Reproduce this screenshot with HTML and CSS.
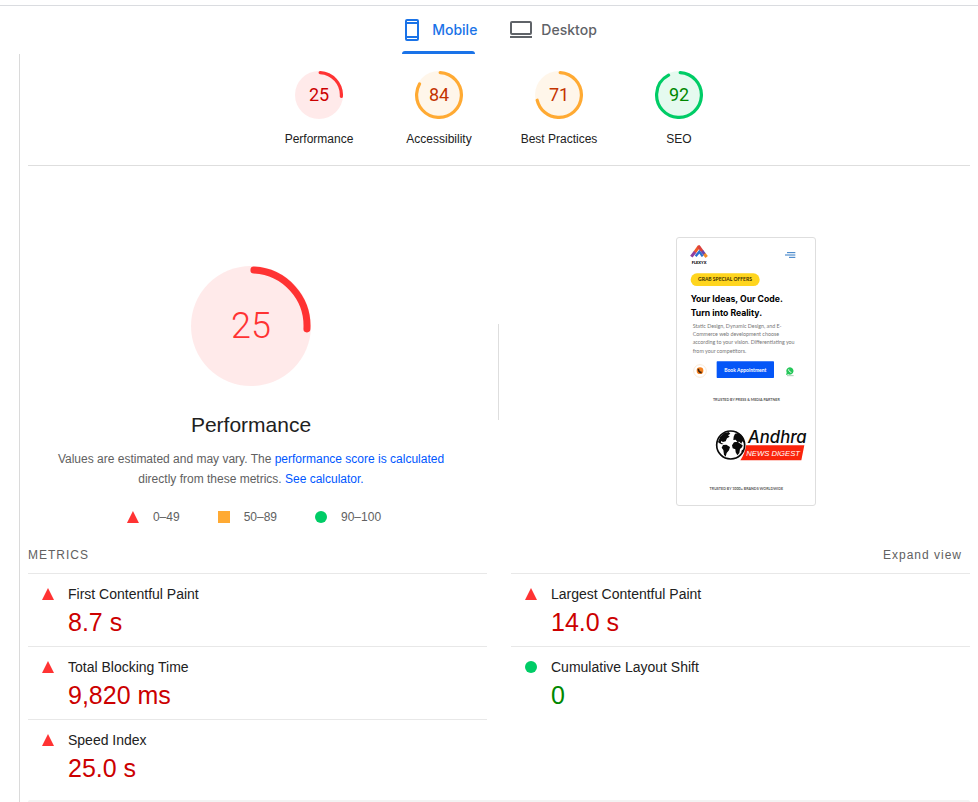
FILE: index.html
```html
<!DOCTYPE html>
<html lang="en">
<head>
<meta charset="utf-8">
<meta name="viewport" content="width=device-width, initial-scale=1">
<title>Performance report</title>
<link rel="stylesheet" href="styles.css">
</head>
<body>
<nav class="tabs" aria-label="Device">
  <button class="tab tab-active" type="button">
    <svg class="tab-icon" viewBox="0 0 24 24" aria-hidden="true"><path fill="currentColor" fill-rule="evenodd" d="M7 1h10a2 2 0 0 1 2 2v18a2 2 0 0 1-2 2H7a2 2 0 0 1-2-2V3a2 2 0 0 1 2-2zm0 2v1h10V3zm0 3v12h10V6zm0 14v1h10v-1z"/></svg>
    <span>Mobile</span>
  </button>
  <button class="tab" type="button">
    <svg class="tab-icon" viewBox="0 0 24 24" aria-hidden="true"><path fill="currentColor" fill-rule="evenodd" d="M3 3h18a2 2 0 0 1 2 2v10a2 2 0 0 1-2 2H3a2 2 0 0 1-2-2V5a2 2 0 0 1 2-2zm0 2v10h18V5zM1 18h22v2H1z"/></svg>
    <span>Desktop</span>
  </button>
</nav>
<main class="report">
  <section class="scores" aria-label="Scores">
    <a class="score fail" href="#performance">
      <span class="gauge"><svg viewBox="0 0 120 120" aria-hidden="true"><circle class="base" cx="60" cy="60" r="60"/><circle class="arc" cx="60" cy="60" r="56" pathLength="100" stroke-dasharray="25 100"/></svg><span class="number">25</span></span>
      <span class="label">Performance</span>
    </a>
    <a class="score average" href="#accessibility">
      <span class="gauge"><svg viewBox="0 0 120 120" aria-hidden="true"><circle class="base" cx="60" cy="60" r="60"/><circle class="arc" cx="60" cy="60" r="56" pathLength="100" stroke-dasharray="82 100"/></svg><span class="number">84</span></span>
      <span class="label">Accessibility</span>
    </a>
    <a class="score average" href="#best-practices">
      <span class="gauge"><svg viewBox="0 0 120 120" aria-hidden="true"><circle class="base" cx="60" cy="60" r="60"/><circle class="arc" cx="60" cy="60" r="56" pathLength="100" stroke-dasharray="70 100"/></svg><span class="number">71</span></span>
      <span class="label">Best Practices</span>
    </a>
    <a class="score pass" href="#seo">
      <span class="gauge"><svg viewBox="0 0 120 120" aria-hidden="true"><circle class="base" cx="60" cy="60" r="60"/><circle class="arc" cx="60" cy="60" r="56" pathLength="100" stroke-dasharray="91 100"/></svg><span class="number">92</span></span>
      <span class="label">SEO</span>
    </a>
  </section>

  <section class="overview" id="performance">
    <div class="summary">
      <div class="gauge gauge-large fail"><svg viewBox="0 0 120 120" aria-hidden="true"><circle class="base" cx="60" cy="60" r="60"/><circle class="arc" cx="60" cy="60" r="56" pathLength="100" stroke-dasharray="25 100"/></svg><span class="number">25</span></div>
      <h1 class="title">Performance</h1>
      <p class="description">Values are estimated and may vary. The <a href="#score">performance score is calculated</a> directly from these metrics. <a href="#calculator">See calculator.</a></p>
      <ul class="legend">
        <li><span class="mark triangle"></span>0–49</li>
        <li><span class="mark square"></span>50–89</li>
        <li><span class="mark dot"></span>90–100</li>
      </ul>
    </div>
    <div class="divider"></div>
    <div class="preview">
      <svg class="thumbnail" viewBox="0 0 414 801" role="img" aria-label="Page preview">
        <g fill="none" stroke-width="9">
          <path stroke="#f0582a" d="M67 24L53 43"/>
          <path stroke="#8f3f9f" d="M54 42L43 56"/>
          <path stroke="#d9413f" d="M64 24l12 16"/>
          <path stroke="#6d45a8" d="M75 39l8 10"/>
          <path stroke="#f28c28" d="M82 48l7 9"/>
          <path stroke="#2f6fd0" stroke-width="7" d="M56 55l11-14 10 14"/>
        </g>
        <text class="thumb-logo" x="66" y="77">FLEXYX</text>
        <path stroke="#2f78c4" stroke-width="3" d="M330 44h25M324 51h31M336 58h19"/>
        <rect x="41" y="106" width="207" height="38" rx="19" fill="#ffd51e"/>
        <text class="thumb-badge" x="144" y="130">GRAB SPECIAL OFFERS</text>
        <text class="thumb-heading" x="41" y="193">Your Ideas, Our Code.</text>
        <text class="thumb-heading" x="41" y="233">Turn into Reality.</text>
        <g class="thumb-copy">
          <text x="47" y="270">Static Design, Dynamic Design, and E-</text>
          <text x="47" y="295">Commerce web development choose</text>
          <text x="47" y="319">according to your vision. Differentiating you</text>
          <text x="47" y="344">from your competitors.</text>
        </g>
        <circle cx="69" cy="399" r="19" fill="#fff" stroke="#f5dfc4" stroke-width="2"/>
        <circle cx="69" cy="398" r="10" fill="#f58220"/>
        <path d="M64 392c0 6 4 11 10 12" fill="none" stroke="#40210b" stroke-width="5"/>
        <rect x="119" y="370" width="172" height="50" rx="2" fill="#0556f7"/>
        <text class="thumb-button" x="205" y="401">Book Appointment</text>
        <path fill="#25c759" d="M339 388a11 11 0 1 1-5 21l-7 2 2-7a11 11 0 0 1 10-16z"/>
        <path d="M335 394c0 5 3 8 8 9" fill="none" stroke="#fff" stroke-width="3"/>
        <path d="M330 413h20" stroke="#79b98c" stroke-width="2"/>
        <text class="thumb-caption" x="208" y="489">TRUSTED BY PRESS &amp; MEDIA PARTNER</text>
        <g>
          <circle cx="161" cy="621" r="42" fill="#fff" stroke="#0b0b0b" stroke-width="5"/>
          <path fill="#0b0b0b" d="M123 612l6-14 12-12 14-4 5 5-7 5 5 4-8 5-4 9-8 2-6-3 0 5 8 4-6 1-8-4zM138 621l10-1 11 7-3 10-7 8-3 11-5-6-2-14-5-7z"/>
          <path fill="#0b0b0b" d="M170 596l4-9 11-2 10 9 6 13 1 9-6-6-3 7-6-6-6 1-5-7-7 1zM171 613l11-2 8 6 7 5-2 6-6 5-2 12-6 7-5-9-1-9-8-3-2-9zM195 635l4 1-3 8-3-2z"/>
          <path fill="#fa240c" d="M207 622h175l-9 45H190q14-20 17-45z"/>
          <text class="thumb-brand" x="213" y="615">Andhra</text>
          <text class="thumb-strap" x="208" y="653">NEWS DIGEST</text>
        </g>
        <text class="thumb-caption" x="208" y="755">TRUSTED BY 1000+ BRANDS WORLDWIDE</text>
      </svg>
    </div>
  </section>

  <section class="metrics">
    <header class="metrics-header">
      <h2>METRICS</h2>
      <button type="button">Expand view</button>
    </header>
    <div class="metric-columns">
      <div class="metric-column">
        <div class="metric fail"><span class="mark triangle"></span><h3>First Contentful Paint</h3><p>8.7 s</p></div>
        <div class="metric fail"><span class="mark triangle"></span><h3>Total Blocking Time</h3><p>9,820 ms</p></div>
        <div class="metric fail"><span class="mark triangle"></span><h3>Speed Index</h3><p>25.0 s</p></div>
      </div>
      <div class="metric-column">
        <div class="metric fail"><span class="mark triangle"></span><h3>Largest Contentful Paint</h3><p>14.0 s</p></div>
        <div class="metric pass"><span class="mark dot"></span><h3>Cumulative Layout Shift</h3><p>0</p></div>
      </div>
    </div>
  </section>
  <div class="next-panel"></div>
</main>
</body>
</html>
```
FILE: styles.css
```css
* { box-sizing: border-box; }

body {
  margin: 0;
  padding-top: 5px;
  background: #fff;
  color: #212121;
  font-family: "Liberation Sans", Arial, sans-serif;
  font-size: 12px;
  line-height: 20px;
}

h1, h2, h3, p, ul { margin: 0; padding: 0; font-weight: 400; }
a { text-decoration: none; }
button { border: 0; padding: 0; background: none; font: inherit; cursor: pointer; }

/* Device tabs */
.tabs {
  display: flex;
  justify-content: center;
  gap: 32px;
  height: 49px;
  padding-left: 19px;
  border-top: 1px solid #dadce0;
}
.tab {
  display: flex;
  align-items: center;
  gap: 8px;
  padding-top: 2px;
  border-bottom: 3px solid transparent;
  color: #5f6368;
  font-family: Inter, sans-serif;
  font-size: 14px;
  font-weight: 500;
}
.tab-icon { width: 24px; height: 24px; }
.tab-active { position: relative; color: #1a73e8; }
.tab-active::after {
  content: "";
  position: absolute;
  left: 2px;
  right: 2px;
  bottom: -3px;
  height: 3px;
  border-radius: 3px 3px 0 0;
  background: #1a73e8;
}

.report {
  margin-left: 19px;
  padding: 17px 8px 0;
  border-left: 1px solid #dadada;
}

/* Rating colours */
.fail { --tone: #f33; --text: #c00; }
.average { --tone: #fa3; --text: #c33300; }
.pass { --tone: #0c6; --text: #080; }

/* Gauges */
.scores {
  display: flex;
  justify-content: center;
  padding-bottom: 16px;
  border-bottom: 1px solid #dedede;
}
.score {
  display: flex;
  flex-direction: column;
  align-items: center;
  gap: 10px;
  width: 120px;
  color: #212121;
}
.gauge {
  display: grid;
  place-items: center;
  width: 48px;
  color: var(--text);
  font-family: Roboto, sans-serif;
  font-size: 18px;
}
.gauge > * { grid-area: 1 / 1; }
.gauge svg { display: block; width: 100%; }
.base { fill: var(--tone); opacity: 0.1; }
.arc {
  fill: none;
  stroke: var(--tone);
  stroke-width: 8;
  stroke-linecap: round;
  transform: rotate(-87deg);
  transform-origin: center;
}
.gauge-large { width: 120px; color: #f33; font-size: 36px; font-weight: 300; }
.gauge-large .arc { stroke-width: 7; }

/* Overview */
.overview {
  display: grid;
  grid-template-columns: 1fr 1px 1fr;
  align-items: center;
  gap: 24px;
  margin: 40px 1px 0 0;
}
.summary {
  display: flex;
  flex-direction: column;
  align-items: center;
  padding: 60px 24px 10px;
}
.title { margin-top: 25px; font-size: 21px; line-height: 28px; }
.description { margin-top: 10px; color: #616161; text-align: center; }
.description a { color: #0057ff; }
.legend {
  display: flex;
  gap: 38px;
  margin-top: 18px;
  padding-left: 6px;
  color: #616161;
  list-style: none;
}
.legend li { display: flex; align-items: center; gap: 14px; }
.divider { height: 96px; background: #dedede; }
.preview { display: flex; justify-content: center; }
.thumbnail {
  width: 140px;
  border: 1px solid #dedede;
  border-radius: 3px;
}

.mark { width: 12px; height: 12px; flex: none; }
.triangle { background: #f33; clip-path: polygon(50% 0, 100% 100%, 0 100%); }
.square { background: #fa3; }
.dot { background: #0c6; border-radius: 50%; }

/* Text of the page preview */
.thumbnail text { font-family: Lato, sans-serif; }
.thumbnail .thumb-logo { font-size: 12px; font-weight: 900; text-anchor: middle; }
.thumbnail .thumb-badge { font-size: 15px; font-weight: 700; fill: #3d2f00; text-anchor: middle; }
.thumbnail .thumb-heading { font-family: Inter, sans-serif; font-size: 26px; font-weight: 700; fill: #000; }
.thumb-copy { font-size: 16px; fill: #777; }
.thumbnail .thumb-button { font-size: 15px; font-weight: 700; fill: #fff; text-anchor: middle; }
.thumbnail .thumb-caption { font-size: 11px; font-weight: 700; fill: #555; text-anchor: middle; }
.thumbnail .thumb-brand { font-family: Inter, sans-serif; font-size: 50px; font-style: italic; font-weight: 500; fill: #0b0b0b; }
.thumbnail .thumb-strap { font-family: "Liberation Sans", sans-serif; font-size: 23px; font-style: italic; fill: #fff; }

/* Metrics */
.metrics-header {
  display: flex;
  justify-content: space-between;
  padding: 8px 8px 8px 0;
  color: #616161;
  letter-spacing: 1px;
}
.metrics-header h2 { font-size: 12px; }
.metrics-header button { color: #616161; letter-spacing: 1px; }
.metric-columns { display: grid; grid-template-columns: 1fr 1fr; gap: 24px; }
.metric {
  display: grid;
  grid-template-columns: 12px 1fr;
  align-items: center;
  column-gap: 14px;
  padding: 10px 14px 6px;
  border-top: 1px solid #e8e8e8;
}
.metric h3 { font-size: 14px; }
.metric p { grid-column: 2; color: var(--text); font-size: 25px; line-height: 36px; }

.next-panel { height: 2px; margin-top: 8px; border-radius: 3px 3px 0 0; background: #f3f3f3; }
```
